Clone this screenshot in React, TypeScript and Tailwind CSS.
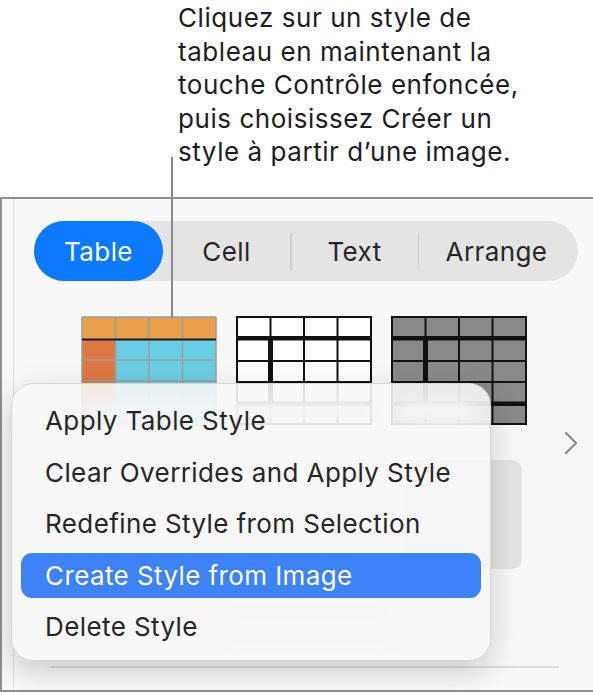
const font = { fontFamily: "Inter, 'Liberation Sans', sans-serif" };

const COLS = [0, 33.5, 67, 100.5, 134];

// Orange/blue "colourful" style thumbnail
const OrangeTable = () => (
  <svg width="136" height="110" viewBox="0 0 136 110">
    <rect x="1" y="1" width="134" height="22" fill="#e8a04c" />
    <rect x="1" y="23" width="33.5" height="86" fill="#de7843" />
    <rect x="34.5" y="23" width="100.5" height="86" fill="#6bcde3" />
    {COLS.map((c) => (
      <line key={c} x1={c + 1} y1="1" x2={c + 1} y2="109" stroke="#9c9c9c" strokeWidth="1.5" />
    ))}
    {[1, 44, 65, 87, 109].map((y) => (
      <line key={y} x1="1" y1={y} x2="135" y2={y} stroke="#9c9c9c" strokeWidth="1.5" />
    ))}
    <line x1="1" y1="23.5" x2="135" y2="23.5" stroke="#1a1a1a" strokeWidth="2" />
  </svg>
);

// Outlined style thumbnail (white or gray fill)
const LinedTable = ({ fill }: { fill: string }) => (
  <svg width="136" height="110" viewBox="0 0 136 110">
    <rect x="1" y="1" width="134" height="107" fill={fill} stroke="#111" strokeWidth="2" />
    {[34.5, 68, 101.5].map((x) => (
      <line key={x} x1={x} y1="1" x2={x} y2="108" stroke="#111" strokeWidth="2" />
    ))}
    {[45, 66].map((y) => (
      <line key={y} x1="1" y1={y} x2="135" y2={y} stroke="#111" strokeWidth="2" />
    ))}
    <rect x="1" y="20" width="134" height="4.5" fill="#111" />
    <rect x="32" y="20" width="5" height="67" fill="#111" />
    <rect x="1" y="85.5" width="134" height="4.5" fill="#111" />
  </svg>
);

const Chevron = () => (
  <svg width="14" height="24" viewBox="0 0 14 24" fill="none">
    <path d="M2 2 L12 12 L2 22" stroke="#8a8a8a" strokeWidth="2.2" strokeLinecap="round" strokeLinejoin="round" />
  </svg>
);

const tabs = ["Cell", "Text", "Arrange"];

const menuItems = [
  "Apply Table Style",
  "Clear Overrides and Apply Style",
  "Redefine Style from Selection",
  "Create Style from Image",
  "Delete Style",
];

export default function App() {
  return (
    <div className="relative w-[593px] h-[692px] bg-white overflow-hidden" style={font}>
      {/* callout */}
      <div className="pl-[178px] pt-[1px] h-[197px] text-[26px] leading-[33.5px] text-[#1d1d1f] tracking-[0.55px]">
        <p>Cliquez sur un style de</p>
        <p>tableau en maintenant la</p>
        <p>touche Contrôle enfoncée,</p>
        <p>puis choisissez Créer un</p>
        <p>style à partir d’une image.</p>
      </div>

      {/* inspector panel */}
      <div className="h-[495px] border-t-2 border-l-2 border-b-2 border-[#8f8f8f] bg-[#f8f8f8]">
        <div className="ml-[11px] h-full border-l border-[#dcdcdc] pt-[22px]">
          <div className="ml-[20px] w-[544px] h-[60px] rounded-full bg-[#e4e4e4] flex items-center text-[26px] tracking-[0.4px] text-[#262626]">
            <div className="w-[129px] h-full rounded-full bg-[#0b7aff] text-white flex items-center justify-center">
              Table
            </div>
            {tabs.map((t, i) => (
              <div key={t} className="flex items-center h-full">
                {i > 0 && <div className="w-[1.5px] h-[37px] bg-[#cdcdcd]" />}
                <div className={`${i === 0 ? "w-[127px]" : i === 1 ? "w-[126px]" : "w-[155px]"} text-center`}>
                  {t}
                </div>
              </div>
            ))}
          </div>

          <div className="flex mt-[35px]">
            <div className="pl-[67px] w-[517px]">
              <div className="flex gap-[19px]">
                <OrangeTable />
                <LinedTable fill="#ffffff" />
                <LinedTable fill="#898989" />
              </div>
              <div className="flex justify-end mt-[34px] mr-[9px]">
                <div className="w-[120px] h-[109px] rounded-[10px] bg-[#e4e4e4]" />
              </div>
            </div>
            <div className="flex items-center pl-[33px]">
              <Chevron />
            </div>
          </div>

          <div className="mt-[97px] ml-[37px] w-[508px] h-[2px] bg-[#dcdcdc]" />
        </div>
      </div>

      {/* leader line */}
      <div className="absolute left-[171px] top-[157px] w-[2px] h-[161px] bg-[#8a8a8a]" />

      {/* faint content behind the menu */}
      <div className="absolute left-[80px] top-[403px] w-[140px] h-[18px] rounded-full bg-[#bfe0f6] blur-[6px]" />
      <div className="absolute left-[232px] top-[404px] w-[140px] h-[14px] rounded-full bg-[#d4d4d4] blur-[5px]" />
      <div className="absolute left-[398px] top-[402px] w-[76px] h-[18px] rounded-full bg-[#cfcfcf] blur-[5px]" />
      <div className="absolute left-[232px] top-[612px] w-[150px] h-[12px] rounded-full bg-[#dcdcdc] blur-[4px]" />
      <div className="absolute left-[225px] top-[635px] w-[170px] h-[12px] rounded-full bg-[#dcdcdc] blur-[4px]" />

      {/* context menu */}
      <div className="absolute left-[11px] top-[383px] w-[480px] h-[278px] rounded-[22px] border border-[#d6d6d6] bg-[#f7f7f7]/90 shadow-[0_10px_30px_rgba(0,0,0,0.18)] px-[9px] pt-[14px]">
        <div className="flex flex-col gap-[6.5px]">
          {menuItems.map((item) => {
            const active = item === "Create Style from Image";
            return (
              <div
                key={item}
                className={`h-[45px] rounded-[11px] pl-[24px] flex items-center text-[26px] tracking-[0.4px] ${
                  active ? "bg-[#3d82f7] text-white" : "text-[#262626]"
                }`}
              >
                {item}
              </div>
            );
          })}
        </div>
      </div>
    </div>
  );
}
